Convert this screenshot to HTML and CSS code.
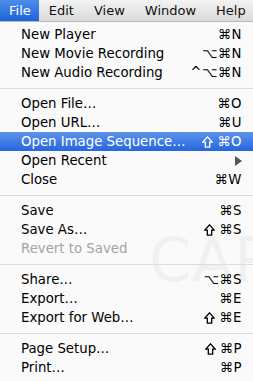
FILE: index.html
```html
<!DOCTYPE html>
<html>
<head>
<meta charset="utf-8">
<link rel="stylesheet" href="styles.css">
</head>
<body>
<div class="screen">
  <div class="menubar">
    <span class="mb-item active">File</span>
    <span class="mb-item">Edit</span>
    <span class="mb-item">View</span>
    <span class="mb-item">Window</span>
    <span class="mb-item">Help</span>
  </div>
  <div class="menu">
    <div class="watermark">CAP</div>
    <div class="item"><span>New Player</span><span class="key">⌘N</span></div>
    <div class="item"><span>New Movie Recording</span><span class="key">⌥⌘N</span></div>
    <div class="item"><span>New Audio Recording</span><span class="key">^⌥⌘N</span></div>
    <div class="sep"></div>
    <div class="item"><span>Open File…</span><span class="key">⌘O</span></div>
    <div class="item"><span>Open URL…</span><span class="key">⌘U</span></div>
    <div class="item selected"><span>Open Image Sequence…</span><span class="key"><svg class="shift" viewBox="0 0 10 11"><path d="M5 0.8 L9.3 5.6 L7 5.6 L7 10.2 L3 10.2 L3 5.6 L0.7 5.6 Z"/></svg>⌘O</span></div>
    <div class="item"><span>Open Recent</span><span class="arrow"></span></div>
    <div class="item"><span>Close</span><span class="key">⌘W</span></div>
    <div class="sep"></div>
    <div class="item"><span>Save</span><span class="key">⌘S</span></div>
    <div class="item"><span>Save As…</span><span class="key"><svg class="shift" viewBox="0 0 10 11"><path d="M5 0.8 L9.3 5.6 L7 5.6 L7 10.2 L3 10.2 L3 5.6 L0.7 5.6 Z"/></svg>⌘S</span></div>
    <div class="item disabled"><span>Revert to Saved</span></div>
    <div class="sep"></div>
    <div class="item"><span>Share…</span><span class="key">⌥⌘S</span></div>
    <div class="item"><span>Export…</span><span class="key">⌘E</span></div>
    <div class="item"><span>Export for Web…</span><span class="key"><svg class="shift" viewBox="0 0 10 11"><path d="M5 0.8 L9.3 5.6 L7 5.6 L7 10.2 L3 10.2 L3 5.6 L0.7 5.6 Z"/></svg>⌘E</span></div>
    <div class="sep"></div>
    <div class="item"><span>Page Setup…</span><span class="key"><svg class="shift" viewBox="0 0 10 11"><path d="M5 0.8 L9.3 5.6 L7 5.6 L7 10.2 L3 10.2 L3 5.6 L0.7 5.6 Z"/></svg>⌘P</span></div>
    <div class="item"><span>Print…</span><span class="key">⌘P</span></div>
  </div>
</div>
</body>
</html>
```

FILE: styles.css
```css
html, body {
  margin: 0;
  padding: 0;
}
body {
  width: 253px;
  height: 381px;
  overflow: hidden;
  font-family: "DejaVu Sans", "Liberation Sans", sans-serif;
  font-size: 13px;
  color: #000;
  background: #f9f9f9;
}
.screen {
  width: 253px;
  height: 381px;
  display: flex;
  flex-direction: column;
}
.menubar {
  height: 21px;
  display: flex;
  align-items: stretch;
  background: linear-gradient(#f3f3f3, #dadada);
  border-bottom: 1px solid #b9b9b9;
}
.mb-item {
  display: flex;
  align-items: center;
  padding: 0 10px;
  font-size: 13px;
  color: #111;
}
.mb-item.active {
  padding: 0 8px 0 9px;
  background: linear-gradient(#4d8ce8, #1d63d8);
  color: #fff;
}
.menu {
  position: relative;
  flex: 1;
  padding-top: 3px;
  background: #fafafa;
  overflow: hidden;
}
.watermark {
  position: absolute;
  left: 149px;
  top: 203px;
  font-family: "DejaVu Sans", sans-serif;
  font-size: 60px;
  color: #f0f0f0;
  letter-spacing: 1px;
  z-index: 0;
}
.item {
  position: relative;
  z-index: 1;
  height: 19px;
  display: flex;
  align-items: center;
  justify-content: space-between;
  padding: 0 11px 0 21px;
  white-space: nowrap;
  font-size: 13.3px;
}
.item.selected {
  background: linear-gradient(#5d93ea, #2566dc);
  color: #fff;
}
.item.disabled {
  color: #a3a3a3;
}
.key {
  display: flex;
  align-items: center;
  gap: 2px;
  letter-spacing: 0.5px;
}
.shift {
  width: 11px;
  height: 12px;
  fill: none;
  stroke: currentColor;
  stroke-width: 1.2;
  stroke-linejoin: miter;
  margin-right: 2px;
}
.arrow {
  width: 0;
  height: 0;
  border-top: 5px solid transparent;
  border-bottom: 5px solid transparent;
  border-left: 7px solid #555;
}
.sep {
  position: relative;
  z-index: 1;
  height: 12px;
  display: flex;
  align-items: center;
}
.sep::before {
  content: "";
  display: block;
  width: 100%;
  height: 1px;
  background: #dcdcdc;
}
```
